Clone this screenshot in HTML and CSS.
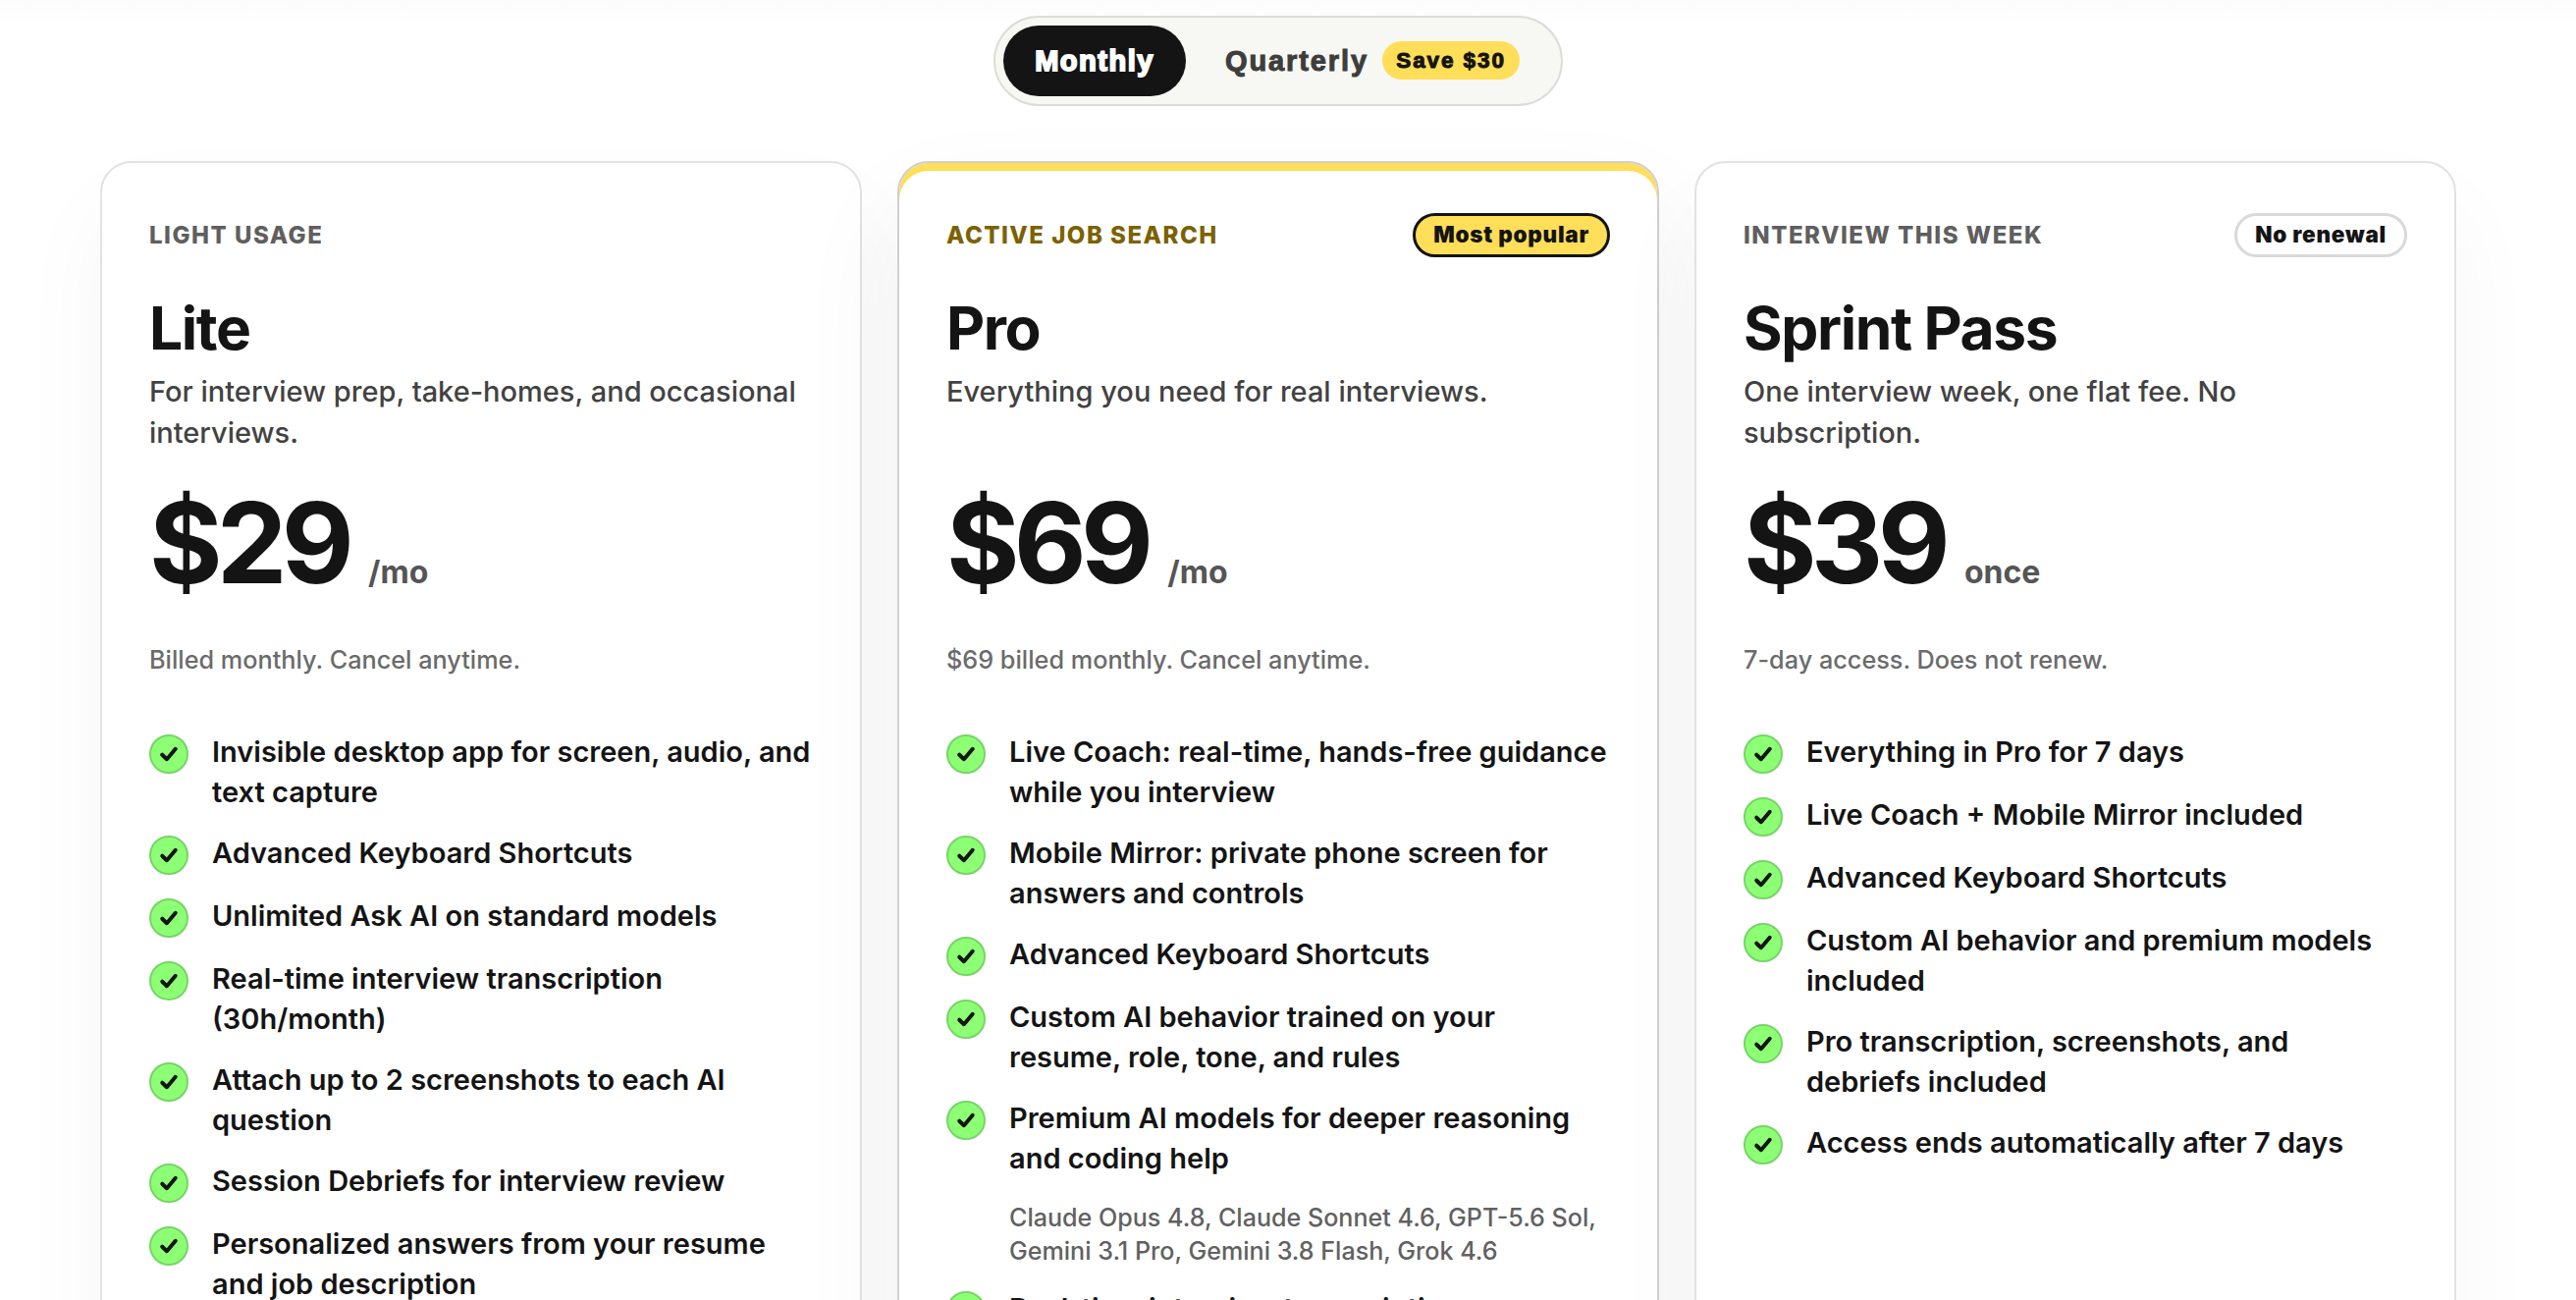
FILE: index.html
```
<!DOCTYPE html>
<html lang="en">
  <head>
    <meta charset="UTF-8" />
    <meta name="viewport" content="width=device-width, initial-scale=1.0" />
    <title>Pricing</title>
    <link rel="stylesheet" href="styles.css">
  </head>
  <body>
    <svg class="icon-defs" width="0" height="0">
      <symbol id="check" viewBox="0 0 40 40">
        <path d="M12.5 20.8 L17.7 25.8 L27.5 14.2" fill="none" stroke="#141414" stroke-width="4.4" stroke-linecap="round" stroke-linejoin="round" />
      </symbol>
    </svg>

    <section class="pricing">
      <div class="billing-toggle">
        <button class="toggle-button active">Monthly</button>
        <button class="toggle-button quarterly"><span>Quarterly</span><span class="save-badge">Save $30</span></button>
      </div>

      <div class="plans">
        <!-- Lite -->
        <div class="plan-card">
          <div class="plan-top">
            <div class="plan-label">LIGHT USAGE</div>
          </div>
          <h3 class="plan-name">Lite</h3>
          <p class="plan-description">For interview prep, take-homes, and occasional interviews.</p>
          <div class="plan-price">
            <span class="amount">$29</span>
            <span class="period">/mo</span>
          </div>
          <p class="plan-billing">Billed monthly. Cancel anytime.</p>
          <ul class="features">
            <li><svg class="check"><use href="#check" /></svg><span>Invisible desktop app for screen, audio, and text capture</span></li>
            <li><svg class="check"><use href="#check" /></svg><span>Advanced Keyboard Shortcuts</span></li>
            <li><svg class="check"><use href="#check" /></svg><span>Unlimited Ask AI on standard models</span></li>
            <li><svg class="check"><use href="#check" /></svg><span>Real-time interview transcription (30h/month)</span></li>
            <li><svg class="check"><use href="#check" /></svg><span>Attach up to 2 screenshots to each AI question</span></li>
            <li><svg class="check"><use href="#check" /></svg><span>Session Debriefs for interview review</span></li>
            <li><svg class="check"><use href="#check" /></svg><span>Personalized answers from your resume and job description</span></li>
          </ul>
        </div>

        <!-- Pro -->
        <div class="plan-card featured">
          <div class="plan-top">
            <div class="plan-label">ACTIVE JOB SEARCH</div>
            <div class="plan-tag">Most popular</div>
          </div>
          <h3 class="plan-name">Pro</h3>
          <p class="plan-description">Everything you need for real interviews.</p>
          <div class="plan-price">
            <span class="amount">$69</span>
            <span class="period">/mo</span>
          </div>
          <p class="plan-billing">$69 billed monthly. Cancel anytime.</p>
          <ul class="features">
            <li><svg class="check"><use href="#check" /></svg><span>Live Coach: real-time, hands-free guidance while you interview</span></li>
            <li><svg class="check"><use href="#check" /></svg><span>Mobile Mirror: private phone screen for answers and controls</span></li>
            <li><svg class="check"><use href="#check" /></svg><span>Advanced Keyboard Shortcuts</span></li>
            <li><svg class="check"><use href="#check" /></svg><span>Custom AI behavior trained on your resume, role, tone, and rules</span></li>
            <li>
              <svg class="check"><use href="#check" /></svg>
              <div>
                Premium AI models for deeper reasoning and coding help
                <p class="models">Claude Opus 4.8, Claude Sonnet 4.6, GPT-5.6 Sol, Gemini 3.1 Pro, Gemini 3.8 Flash, Grok 4.6</p>
              </div>
            </li>
            <li><svg class="check"><use href="#check" /></svg><span>Real-time interview transcription</span></li>
          </ul>
        </div>

        <!-- Sprint Pass -->
        <div class="plan-card">
          <div class="plan-top">
            <div class="plan-label">INTERVIEW THIS WEEK</div>
            <div class="plan-tag">No renewal</div>
          </div>
          <h3 class="plan-name">Sprint Pass</h3>
          <p class="plan-description">One interview week, one flat fee. No subscription.</p>
          <div class="plan-price">
            <span class="amount">$39</span>
            <span class="period">once</span>
          </div>
          <p class="plan-billing">7-day access. Does not renew.</p>
          <ul class="features">
            <li><svg class="check"><use href="#check" /></svg><span>Everything in Pro for 7 days</span></li>
            <li><svg class="check"><use href="#check" /></svg><span>Live Coach + Mobile Mirror included</span></li>
            <li><svg class="check"><use href="#check" /></svg><span>Advanced Keyboard Shortcuts</span></li>
            <li><svg class="check"><use href="#check" /></svg><span>Custom AI behavior and premium models included</span></li>
            <li><svg class="check"><use href="#check" /></svg><span>Pro transcription, screenshots, and debriefs included</span></li>
            <li><svg class="check"><use href="#check" /></svg><span>Access ends automatically after 7 days</span></li>
          </ul>
        </div>
      </div>
    </section>
  </body>
</html>
```
FILE: styles.css
```
* {
  box-sizing: border-box;
  margin: 0;
  padding: 0;
}

body {
  background: #fff;
  color: #141414;
  font-family: Inter, Arial, sans-serif;
}

.icon-defs {
  display: block;
}

.pricing {
  height: 1324px;
  padding: 16px 122px 0 102px;
  overflow: hidden;
  background: linear-gradient(#fcfcfc, #fff 28px);
}

.billing-toggle {
  display: flex;
  align-items: center;
  width: 580px;
  height: 92px;
  margin: 0 auto 56px;
  padding: 8px;
  border: 2px solid #dcddd8;
  border-radius: 46px;
  background: #f7f8f3;
}

.toggle-button {
  display: flex;
  align-items: center;
  justify-content: center;
  height: 72px;
  padding-top: 1px;
  border: none;
  border-radius: 36px;
  background: none;
  color: #3d3d3d;
  font-family: 'Liberation Sans', Arial, sans-serif;
  font-size: 29px;
  font-weight: 900;
  letter-spacing: 1.9px;
  -webkit-text-stroke: 1px;
}

.toggle-button.active {
  width: 186px;
  background: #141414;
  color: #fff;
  letter-spacing: 1.5px;
  -webkit-text-stroke: 1.8px;
}

.quarterly {
  gap: 14px;
  padding-left: 40px;
}

.save-badge {
  width: 140px;
  margin-top: -2px;
  border-radius: 20px;
  background: #ffde59;
  color: #141414;
  font-size: 22.5px;
  line-height: 39px;
  text-align: center;
}

.plans {
  display: grid;
  grid-template-columns: repeat(3, 776px);
  justify-content: space-between;
}

.plan-card {
  height: 1500px;
  padding: 51px 48px;
  border: 2px solid #e2e2e2;
  border-radius: 32px;
  background: #fff;
  box-shadow: 0 48px 96px rgba(0, 0, 0, 0.04);
}

.plan-card.featured {
  border-color: #cfcfcf;
  box-shadow: inset 0 8px 0 #ffde59, 0 48px 112px rgba(0, 0, 0, 0.06);
}

.plan-top {
  display: flex;
  align-items: center;
  justify-content: space-between;
  height: 45px;
}

.plan-label {
  color: #5f5f5f;
  font-size: 24px;
  font-weight: 800;
  letter-spacing: 1.5px;
}

.featured .plan-label {
  color: #7a6200;
}

.plan-tag {
  height: 45px;
  padding: 0 18px;
  border: 3px solid #d9d9d9;
  border-radius: 23px;
  font-size: 22.5px;
  font-weight: 900;
  line-height: 38px;
  letter-spacing: 0.75px;
}

.featured .plan-tag {
  border-color: #141414;
  background: #ffde59;
}

.plan-name {
  margin-top: 38px;
  font-size: 60.5px;
  font-weight: 700;
  line-height: 68px;
  letter-spacing: -1.4px;
}

.plan-description {
  height: 84px;
  margin-top: 10px;
  color: #424242;
  font-size: 29px;
  font-weight: 500;
  line-height: 42px;
}

.plan-price {
  display: flex;
  align-items: baseline;
  gap: 20px;
  height: 116px;
  margin-top: 33px;
}

.amount {
  font-size: 114px;
  font-weight: 700;
  line-height: 116px;
  letter-spacing: -5.8px;
}

.period {
  color: #555;
  font-size: 32px;
  font-weight: 700;
}

.plan-billing {
  margin-top: 43px;
  color: #6b6b6b;
  font-size: 25.25px;
  font-weight: 500;
  line-height: 36px;
}

.features {
  display: grid;
  gap: 22px;
  margin-top: 56px;
  list-style: none;
}

.features li {
  display: flex;
  gap: 24px;
  font-size: 29px;
  font-weight: 600;
  line-height: 40.5px;
}

.check {
  flex: none;
  width: 40px;
  height: 40px;
  margin-top: 2px;
  border: 2px solid #78d468;
  border-radius: 50%;
  background: #8cff75;
}

.models {
  margin-top: 23px;
  color: #616161;
  font-size: 25.1px;
  font-weight: 500;
  line-height: 34px;
}
```
